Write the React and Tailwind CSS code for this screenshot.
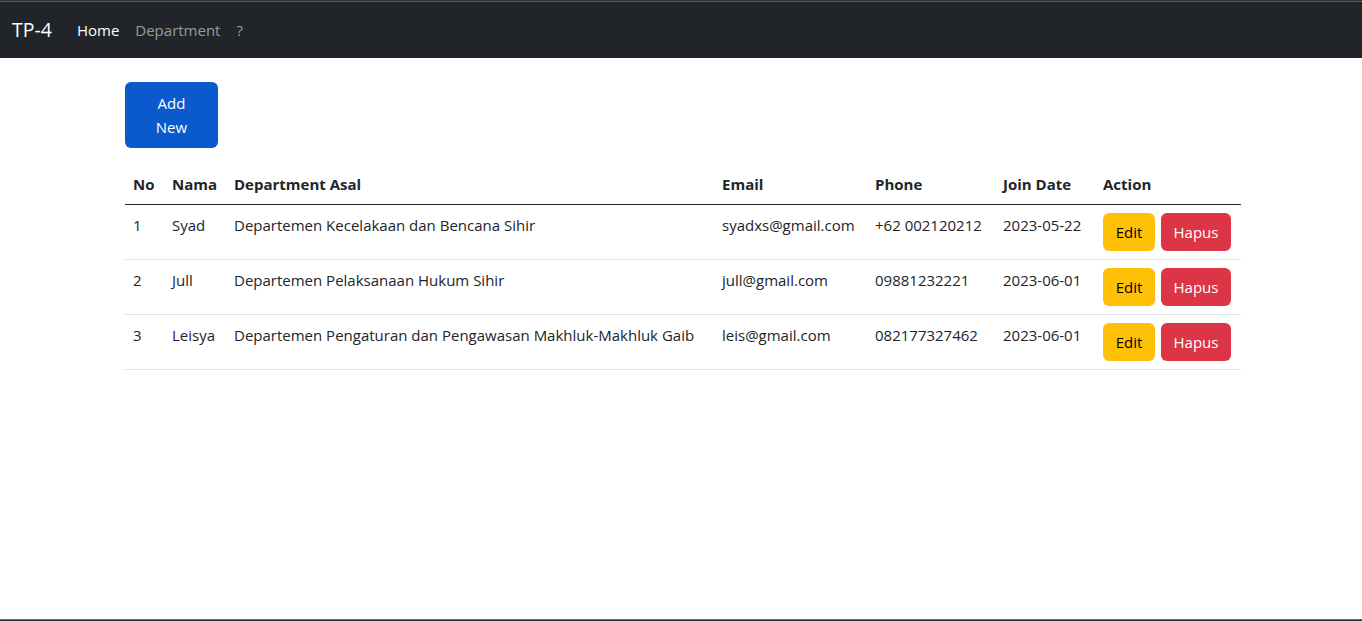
import React from "react";

const rows = [
  { no: 1, nama: "Syad", dept: "Departemen Kecelakaan dan Bencana Sihir", email: "syadxs@gmail.com", phone: "+62 002120212", date: "2023-05-22" },
  { no: 2, nama: "Jull", dept: "Departemen Pelaksanaan Hukum Sihir", email: "jull@gmail.com", phone: "09881232221", date: "2023-06-01" },
  { no: 3, nama: "Leisya", dept: "Departemen Pengaturan dan Pengawasan Makhluk-Makhluk Gaib", email: "leis@gmail.com", phone: "082177327462", date: "2023-06-01" },
];

const cols = [
  ["No", "w-[39px]"],
  ["Nama", "w-[62px]"],
  ["Department Asal", "w-[488px]"],
  ["Email", "w-[153px]"],
  ["Phone", "w-[128px]"],
  ["Join Date", "w-[100px]"],
  ["Action", "w-[146px]"],
];

export default function App() {
  return (
    <div className="h-[621px] w-full bg-white flex flex-col text-[#212529] font-['Open_Sans',sans-serif] text-[15px] leading-[24px]">
      <div className="h-[1px] bg-[#2e2e2e]" />
      <div className="h-[1px] bg-[#5c5c5c]" />
      <nav className="h-[56px] bg-[#212529] flex items-center px-[12px]">
        <span className="text-white text-[19.5px] leading-[30px] mr-[25px]">TP-4</span>
        <span className="text-white mr-[16px]">Home</span>
        <span className="text-[rgba(255,255,255,0.55)] mr-[16px]">Department</span>
        <span className="text-[rgba(255,255,255,0.55)]">?</span>
      </nav>
      <main className="flex-1 ml-[125px] w-[1116px] pt-[24px]">
        <button className="w-[93px] h-[66px] rounded-[6px] bg-[#0b5acd] text-white flex flex-col items-center justify-center">
          <span>Add</span>
          <span>New</span>
        </button>
        <table className="mt-[16px] w-[1116px] table-fixed border-collapse">
          <colgroup>
            {cols.map(([n, w]) => (
              <col key={n} className={w} />
            ))}
          </colgroup>
          <thead>
            <tr className="border-b border-[#212529]">
              {cols.map(([n]) => (
                <th key={n} className="text-left font-bold p-[8px] align-top">{n}</th>
              ))}
            </tr>
          </thead>
          <tbody>
            {rows.map((r) => (
              <tr key={r.no} className="border-b border-[#dee2e6]">
                <td className="p-[8px] align-top">{r.no}</td>
                <td className="p-[8px] align-top">{r.nama}</td>
                <td className="p-[8px] align-top whitespace-nowrap">{r.dept}</td>
                <td className="p-[8px] align-top whitespace-nowrap">{r.email}</td>
                <td className="p-[8px] align-top whitespace-nowrap">{r.phone}</td>
                <td className="p-[8px] align-top whitespace-nowrap">{r.date}</td>
                <td className="p-[8px] align-top">
                  <div className="flex gap-[6px]">
                    <button className="h-[38px] w-[52px] rounded-[6px] bg-[#ffc107] text-black">Edit</button>
                    <button className="h-[38px] w-[70px] rounded-[6px] bg-[#dc3545] text-white">Hapus</button>
                  </div>
                </td>
              </tr>
            ))}
          </tbody>
        </table>
      </main>
      <div className="h-[1px] bg-[#6a6a6a]" />
      <div className="h-[1px] bg-[#2e2e2e]" />
    </div>
  );
}
